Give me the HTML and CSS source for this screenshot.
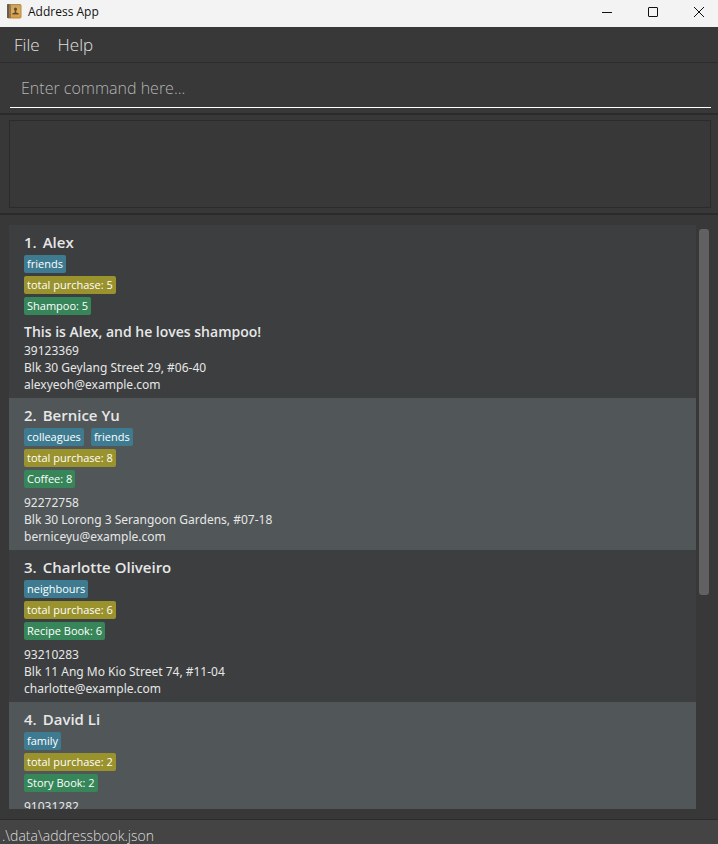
FILE: index.html
```html
<!DOCTYPE html>
<html lang="en">
<head>
<meta charset="utf-8">
<title>Address App</title>
<link rel="stylesheet" href="styles.css">
</head>
<body>
<header class="titlebar">
  <svg class="app-icon" viewBox="0 0 15 15" aria-hidden="true">
    <defs>
      <linearGradient id="cover" x1="0" y1="0" x2="0" y2="1">
        <stop offset="0" stop-color="#c4a25c"/>
        <stop offset="0.5" stop-color="#e0ad5c"/>
        <stop offset="1" stop-color="#d8993c"/>
      </linearGradient>
    </defs>
    <rect x="0.5" y="0.5" width="13.5" height="13.5" rx="1" fill="url(#cover)" stroke="#b98a45"/>
    <rect x="0" y="0" width="2.600" height="14" rx="0.6" fill="#6a5a50"/>
    <rect x="3" y="0.5" width="1" height="13.5" fill="#96784a"/>
    <ellipse cx="8.5" cy="5.3" rx="1.5" ry="1.7" fill="#5e4d34"/>
    <path d="M7.800 6.500h1.400v2l2.400.7v1.400H5.400V9.200l2.400-.7z" fill="#5e4d34"/>
  </svg>
  <h1 class="app-title">Address App</h1>
  <div class="window-buttons">
    <button type="button" class="window-button" aria-label="Minimize"><svg viewBox="0 0 12 12"><path d="M1 6.500h10"/></svg></button>
    <button type="button" class="window-button" aria-label="Maximize"><svg viewBox="0 0 12 12"><rect x="1.500" y="1.500" width="9" height="9" rx="0.500"/></svg></button>
    <button type="button" class="window-button" aria-label="Close"><svg viewBox="0 0 12 12"><path d="M1 1l10 10M11 1L1 11"/></svg></button>
  </div>
</header>
<nav class="menubar">
  <button type="button" class="menu">File</button>
  <button type="button" class="menu">Help</button>
</nav>
<form class="command-pane">
  <input class="command" type="text" placeholder="Enter command here..." aria-label="Command">
</form>
<section class="result-pane">
  <output class="result"></output>
</section>
<main class="list-pane">
  <ol class="people">
    <li class="person">
      <h2 class="name"><span>1.</span><span>Alex</span></h2>
      <div class="tags"><span class="tag">friends</span></div>
      <div class="tags"><span class="tag total">total purchase: 5</span></div>
      <div class="tags"><span class="tag item">Shampoo: 5</span></div>
      <div class="details">
        <p class="note">This is Alex, and he loves shampoo!</p>
        <p>39123369</p>
        <p>Blk 30 Geylang Street 29, #06-40</p>
        <p>alexyeoh@example.com</p>
      </div>
    </li>
    <li class="person">
      <h2 class="name"><span>2.</span><span>Bernice Yu</span></h2>
      <div class="tags"><span class="tag">colleagues</span><span class="tag">friends</span></div>
      <div class="tags"><span class="tag total">total purchase: 8</span></div>
      <div class="tags"><span class="tag item">Coffee: 8</span></div>
      <div class="details">
        <p>92272758</p>
        <p>Blk 30 Lorong 3 Serangoon Gardens, #07-18</p>
        <p>berniceyu@example.com</p>
      </div>
    </li>
    <li class="person">
      <h2 class="name"><span>3.</span><span>Charlotte Oliveiro</span></h2>
      <div class="tags"><span class="tag">neighbours</span></div>
      <div class="tags"><span class="tag total">total purchase: 6</span></div>
      <div class="tags"><span class="tag item">Recipe Book: 6</span></div>
      <div class="details">
        <p>93210283</p>
        <p>Blk 11 Ang Mo Kio Street 74, #11-04</p>
        <p>charlotte@example.com</p>
      </div>
    </li>
    <li class="person">
      <h2 class="name"><span>4.</span><span>David Li</span></h2>
      <div class="tags"><span class="tag">family</span></div>
      <div class="tags"><span class="tag total">total purchase: 2</span></div>
      <div class="tags"><span class="tag item">Story Book: 2</span></div>
      <div class="details">
        <p>91031282</p>
      </div>
    </li>
  </ol>
  <div class="scrollbar"><div class="thumb"></div></div>
</main>
<footer class="statusbar">.\data\addressbook.json</footer>
</body>
</html>
```

FILE: styles.css
```css
* {
  box-sizing: border-box;
}

body {
  margin: 0;
  height: 100vh;
  display: flex;
  flex-direction: column;
  overflow: hidden;
  background: #383838;
  color: #e6e7e7;
  font-family: "Open Sans", "Noto Sans", sans-serif;
  font-size: 12px;
}

h1,
h2,
p,
ol {
  margin: 0;
  padding: 0;
}

button {
  border: 0;
  padding: 0;
  background: none;
  font-family: inherit;
}

.titlebar {
  display: flex;
  flex: none;
  align-items: center;
  height: 27px;
  padding: 0 0 4px 7px;
  background: #f3f3f3;
  color: #111;
}

.app-icon {
  width: 15px;
  height: 15px;
}

.app-title {
  margin-left: 6px;
  font-size: 12px;
  font-weight: 400;
  line-height: 16px;
}

.window-buttons {
  display: flex;
  margin-left: auto;
}

.window-button {
  display: flex;
  align-items: center;
  justify-content: center;
  width: 46px;
  height: 23px;
}

.window-button:last-child {
  width: 42px;
  padding-left: 4px;
}

.window-button svg {
  width: 12px;
  height: 12px;
  fill: none;
  stroke: #111;
}

.menubar {
  display: flex;
  flex: none;
  gap: 18px;
  height: 36px;
  padding: 0 14px;
  border-bottom: 1px solid #2b2b2b;
}

.menu {
  color: #e0e0e0;
  font-size: 17px;
  font-weight: 300;
}

.command-pane {
  flex: none;
  padding: 5px 7px 5px 10px;
  border-bottom: 2px solid #2b2b2b;
}

.command {
  display: block;
  width: 100%;
  height: 40px;
  padding: 0 11px;
  border: 0;
  border-bottom: 1px solid #fff;
  background: none;
  color: #fff;
  font-family: inherit;
  font-size: 16px;
  font-weight: 300;
}

.command::placeholder {
  color: #b4b4b4;
}

.result-pane {
  flex: none;
  padding: 5px 7px 5px 9px;
  border-bottom: 2px solid #2b2b2b;
}

.result {
  display: block;
  height: 88px;
  border: 1px solid #2b2b2b;
}

.list-pane {
  display: flex;
  flex: 1;
  min-height: 0;
  padding: 10px 9px 10px 9px;
}

.people {
  flex: 1;
  overflow: hidden;
  list-style: none;
}

.person {
  padding: 5px 15px;
  background: #3c3e3f;
}

.person:nth-child(even) {
  background: #515658;
}

.name {
  display: flex;
  gap: 6px;
  height: 25px;
  font-size: 15px;
  font-weight: 600;
  line-height: 24px;
}

.tags {
  display: flex;
  gap: 7px;
  margin-bottom: 3px;
}

.tag {
  height: 18px;
  padding: 0 3px;
  border-radius: 2px;
  background: #3e7b91;
  color: #fff;
  font-size: 11px;
  line-height: 18px;
}

.total {
  background: #9a922c;
}

.item {
  background: #378659;
}

.details {
  padding-top: 3px;
  font-family: "Noto Sans", "Open Sans", sans-serif;
  font-size: 12px;
  line-height: 17px;
}

.note {
  font-family: "Open Sans", "Noto Sans", sans-serif;
  font-size: 14px;
  font-weight: 600;
  line-height: 21px;
}

.scrollbar {
  flex: none;
  width: 13px;
  padding: 4px 0 8px 3px;
}

.thumb {
  height: 64%;
  border-radius: 3px;
  background: #616161;
}

.statusbar {
  flex: none;
  height: 25px;
  padding: 4px 2px 0;
  border-top: 1px solid #2b2b2b;
  background: #444;
  color: #dcdcdc;
  font-size: 14px;
  font-weight: 300;
  line-height: 24px;
}
```
